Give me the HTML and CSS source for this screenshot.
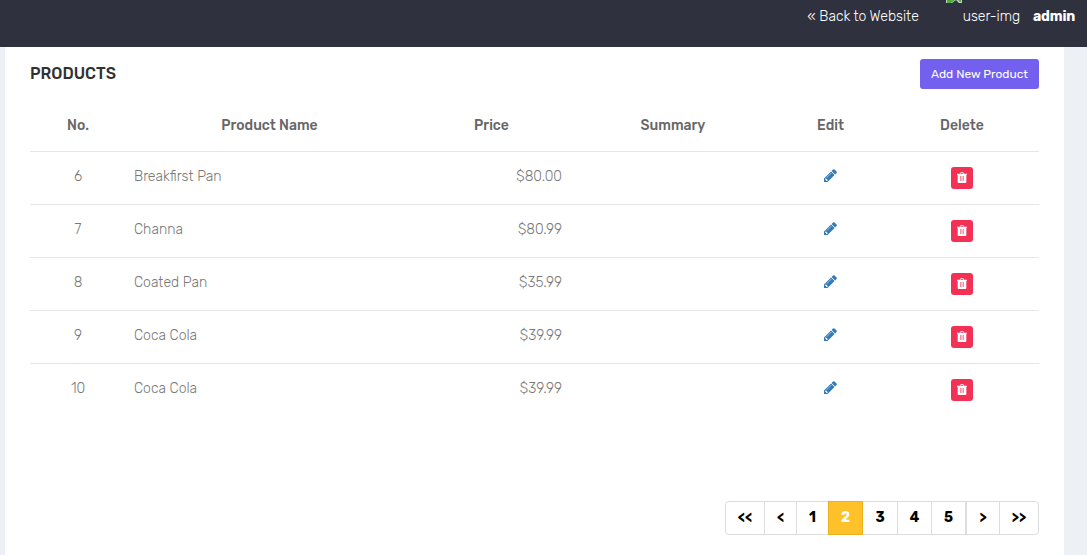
FILE: index.html
```html
<!DOCTYPE html>
<html lang="en">
<head>
<meta charset="utf-8">
<title>Products</title>
<link rel="stylesheet" href="styles.css">
</head>
<body>
<svg class="sprite" aria-hidden="true">
  <symbol id="pencil" viewBox="0 0 1536 1536">
    <path d="M363 1408l91-91-235-235-91 91v107h128v128zM886 480q0-22-22-22-10 0-17 7l-542 542q-7 7-7 17 0 22 22 22 10 0 17-7l542-542q7-7 7-17zM832 288l416 416-832 832H0v-416zM1515 384q0 53-37 90l-166 166-416-416 166-165q36-38 90-38 53 0 91 38l235 234q37 39 37 91z"/>
  </symbol>
  <symbol id="trash" viewBox="0 0 1408 1536">
    <path fill-rule="evenodd" d="M0 256h400l60-170q24-54 84-54h320q60 0 84 54l60 170h400v128h-96v1010q0 142-100 142H196Q96 1536 96 1394V384H0zM480 256h448l-48-112q-10-16-24-16H552q-14 0-24 16zM420 560v704h80V560zM664 560v704h80V560zM908 560v704h80V560z"/>
  </symbol>
</svg>
<header class="navbar">
  <a class="back">« Back to Website</a>
  <a class="profile">
    <svg class="broken" width="16" height="3" viewBox="0 0 16 3"><path fill="#c9cdd0" d="M0 0h16v3h-3L10 0 6 3H0z"/><path fill="#4caf37" d="M1 0h8L5 3H1zM12 0h3v2h-1z"/></svg>
    <span class="alt">user-img</span>
    <b class="user">admin</b>
  </a>
</header>
<main class="panel">
  <div class="heading">
    <h3 class="title">PRODUCTS</h3>
    <button class="add">Add New Product</button>
  </div>
  <table class="products">
    <colgroup><col class="c-no"><col class="c-name"><col class="c-price"><col class="c-summary"><col class="c-edit"><col class="c-delete"></colgroup>
    <thead>
      <tr><th>No.</th><th>Product Name</th><th>Price</th><th>Summary</th><th>Edit</th><th>Delete</th></tr>
    </thead>
    <tbody>
      <tr><td>6</td><td class="name">Breakfirst Pan</td><td class="price">$80.00</td><td></td><td><svg class="pencil"><use href="#pencil"/></svg></td><td><span class="delete"><svg class="trash"><use href="#trash"/></svg></span></td></tr>
      <tr><td>7</td><td class="name">Channa</td><td class="price">$80.99</td><td></td><td><svg class="pencil"><use href="#pencil"/></svg></td><td><span class="delete"><svg class="trash"><use href="#trash"/></svg></span></td></tr>
      <tr><td>8</td><td class="name">Coated Pan</td><td class="price">$35.99</td><td></td><td><svg class="pencil"><use href="#pencil"/></svg></td><td><span class="delete"><svg class="trash"><use href="#trash"/></svg></span></td></tr>
      <tr><td>9</td><td class="name">Coca Cola</td><td class="price">$39.99</td><td></td><td><svg class="pencil"><use href="#pencil"/></svg></td><td><span class="delete"><svg class="trash"><use href="#trash"/></svg></span></td></tr>
      <tr><td>10</td><td class="name">Coca Cola</td><td class="price">$39.99</td><td></td><td><svg class="pencil"><use href="#pencil"/></svg></td><td><span class="delete"><svg class="trash"><use href="#trash"/></svg></span></td></tr>
    </tbody>
  </table>
  <nav class="pagination">
    <a class="page edge">&lt;&lt;</a><a class="page step">&lt;</a><a class="page step">1</a><a class="page active">2</a><a class="page after">3</a><a class="page">4</a><a class="page">5</a><a class="page next">&gt;</a><a class="page edge">&gt;&gt;</a>
  </nav>
</main>
</body>
</html>
```
FILE: styles.css
```css
* { box-sizing: border-box; }
body {
  margin: 0;
  height: 555px;
  overflow: hidden;
  background: #edf1f5;
  font-family: Rubik, Roboto, sans-serif;
  font-size: 14px;
  color: #797979;
}
.sprite { display: none; }
.navbar {
  display: flex;
  justify-content: flex-end;
  height: 47px;
  padding-right: 12px;
  background: #2f323e;
  color: #fff;
  font-weight: 300;
  line-height: 34px;
}
.back { margin-right: 28px; }
.profile { display: flex; }
.broken { display: block; margin-left: -1px; margin-right: 1px; }
.alt { margin-right: 13px; }
.user { font-weight: 700; letter-spacing: -0.2px; }
.panel {
  height: 508px;
  margin: 0 23px 0 5px;
  padding: 12px 25px 0;
  background: #fff;
}
.heading {
  display: flex;
  justify-content: space-between;
  height: 30px;
}
.title {
  margin: 0;
  font-size: 16px;
  font-weight: 500;
  line-height: 30px;
  color: #313131;
}
.add {
  width: 119px;
  height: 30px;
  padding: 0;
  border: 0;
  border-radius: 3px;
  background: #7460ee;
  color: #fff;
  font: 400 12px/30px Rubik, Roboto, sans-serif;
}
.products {
  width: 1009px;
  margin-top: 10px;
  table-layout: fixed;
  border-collapse: separate;
  border-spacing: 0;
}
.c-no { width: 96px; }
.c-name { width: 287px; }
.c-price { width: 157px; }
.c-summary { width: 206px; }
.c-edit { width: 109px; }
.c-delete { width: 154px; }
.products th {
  height: 52px;
  padding: 2px 0 0;
  color: #666;
  font-weight: 500;
  line-height: 20px;
}
.products td {
  height: 53px;
  padding: 15px 8px 0;
  border-top: 1px solid #e4e7ea;
  font-weight: 300;
  line-height: 20px;
  text-align: center;
  vertical-align: top;
}
.products .name { text-align: left; }
.products .price { text-align: right; }
.pencil {
  display: block;
  width: 13px;
  height: 13px;
  margin: 2px 0 0 40px;
  fill: #337ab7;
}
.delete {
  display: flex;
  align-items: flex-start;
  justify-content: center;
  width: 22px;
  height: 22px;
  margin: 0 auto;
  padding-top: 5px;
  border-radius: 3px;
  background: #f33155;
}
.trash { width: 10px; height: 11px; fill: #fff; }
.pagination {
  display: flex;
  justify-content: flex-end;
  margin-top: 85px;
}
.page {
  width: 35px;
  height: 34px;
  margin-left: -1px;
  border: 1px solid #ddd;
  color: #000;
  font-weight: 700;
  line-height: 32px;
  text-align: center;
}
.edge { width: 40px; }
.step { width: 33px; }
.after { width: 36px; }
.next { width: 34px; margin-left: 0; }
.edge:first-child { border-radius: 4px 0 0 4px; }
.edge:last-child { border-radius: 0 4px 4px 0; }
.active {
  z-index: 1;
  border-color: #edb021;
  background: #ffc12a;
  color: #fff;
}
```
